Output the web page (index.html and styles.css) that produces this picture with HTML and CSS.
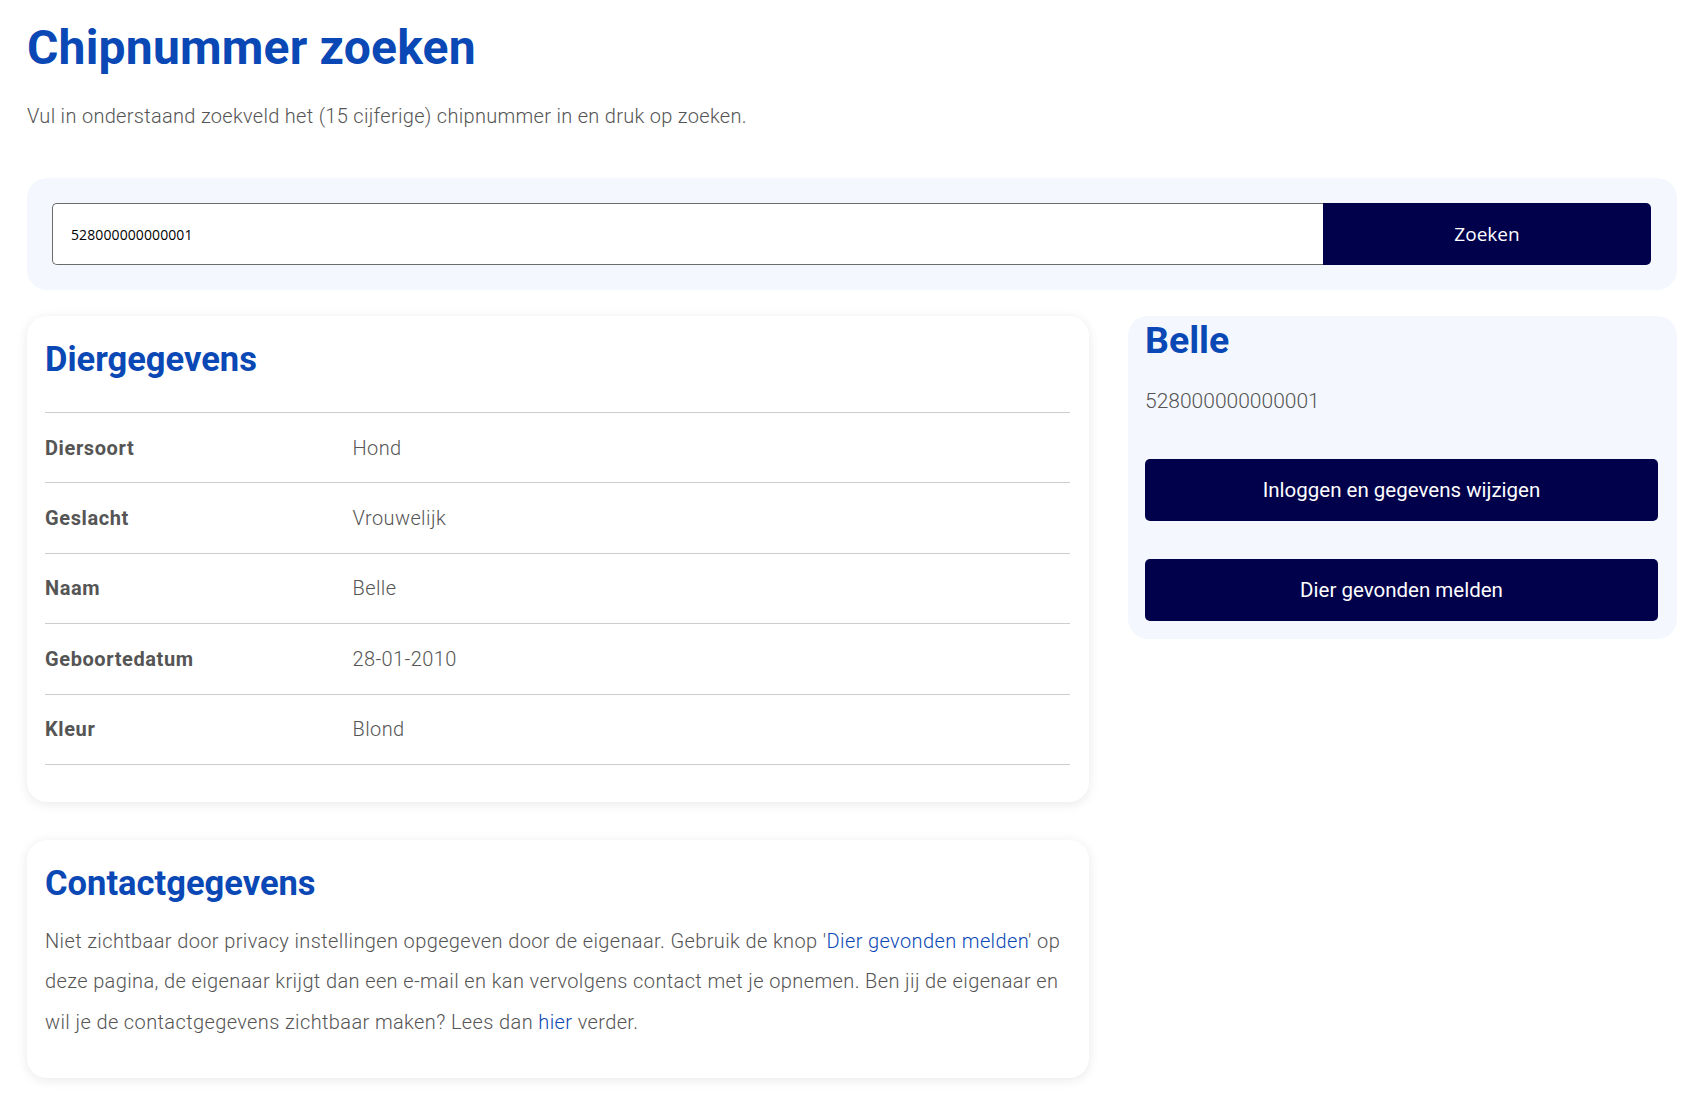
FILE: index.html
```html
<!DOCTYPE html>
<html lang="nl">
<head>
    <meta charset="UTF-8">
    <meta name="viewport" content="width=device-width, initial-scale=1.0">
    <title>Chipnummer zoeken</title>
    <link rel="stylesheet" href="styles.css">
</head>
<body>
    <div class="page">
        <h1 class="page-title">Chipnummer zoeken</h1>
        <p class="intro">Vul in onderstaand zoekveld het (15 cijferige) chipnummer in en druk op zoeken.</p>

        <form class="search-panel" onsubmit="return false;">
            <input class="search-input" type="text" value="528000000000001">
            <button class="search-button" type="submit">Zoeken</button>
        </form>

        <div class="result">
            <div class="main-col">
                <div class="card">
                    <h2 class="card-title">Diergegevens</h2>
                    <table class="details">
                        <tr><th>Diersoort</th><td>Hond</td></tr>
                        <tr><th>Geslacht</th><td>Vrouwelijk</td></tr>
                        <tr><th>Naam</th><td>Belle</td></tr>
                        <tr><th>Geboortedatum</th><td>28-01-2010</td></tr>
                        <tr><th>Kleur</th><td>Blond</td></tr>
                    </table>
                </div>

                <div class="card contact">
                    <h2 class="card-title">Contactgegevens</h2>
                    <p>Niet zichtbaar door privacy instellingen opgegeven door de eigenaar. Gebruik de knop '<a href="#">Dier gevonden melden</a>' op deze pagina, de eigenaar krijgt dan een e-mail en kan vervolgens contact met je opnemen. Ben jij de eigenaar en wil je de contactgegevens zichtbaar maken? Lees dan <a href="#">hier</a> verder.</p>
                </div>
            </div>

            <div class="side-card">
                <h2 class="side-title">Belle</h2>
                <p class="chip">528000000000001</p>
                <a class="action" href="#">Inloggen en gegevens wijzigen</a>
                <a class="action" href="#">Dier gevonden melden</a>
            </div>
        </div>
    </div>
</body>
</html>
```

FILE: styles.css
```css
body {
    margin: 0;
    font-family: Roboto, "Liberation Sans", sans-serif;
    color: #5a5a5a;
    background-color: #fff;
}
.page {
    padding: 0 22px 40px 27px;
}
.page-title {
    margin: 0;
    padding-top: 20px;
    font-size: 48px;
    line-height: 56px;
    font-weight: 700;
    color: #0a48b5;
    letter-spacing: 0.2px;
}
.intro {
    margin: 28px 0 0;
    font-size: 20px;
    line-height: 24px;
    font-weight: 300;
    letter-spacing: 0.3px;
    color: #555;
}
.search-panel {
    display: flex;
    margin-top: 50px;
    padding: 25px 26px 25px 25px;
    background-color: #f4f8fe;
    border-radius: 20px;
}
.search-input {
    flex: 1;
    height: 62px;
    box-sizing: border-box;
    padding: 0 18px;
    border: 1px solid #6b6b6b;
    border-right: none;
    border-radius: 5px 0 0 5px;
    font-family: "Open Sans", sans-serif;
    font-size: 14px;
    letter-spacing: 0.1px;
    color: #000;
    outline: none;
}
.search-button {
    width: 328px;
    height: 62px;
    border: none;
    border-radius: 0 5px 5px 0;
    background-color: #00004b;
    color: #fff;
    font-family: "Open Sans", sans-serif;
    font-size: 19px;
    cursor: pointer;
}
.result {
    display: grid;
    grid-template-columns: minmax(0, 1062fr) minmax(0, 549fr);
    gap: 39px;
    margin-top: 26px;
    align-items: start;
}
.main-col {
    display: flex;
    flex-direction: column;
    gap: 38px;
}
.card {
    background-color: #fff;
    border-radius: 20px;
    box-shadow: 0 2px 12px rgba(0, 0, 0, 0.09);
    padding: 23px 19px 37px 18px;
}
.card-title {
    margin: 0;
    font-size: 34.5px;
    line-height: 40px;
    font-weight: 700;
    color: #0a48b5;
}
.details {
    width: 100%;
    margin-top: 33px;
    border-collapse: collapse;
    font-size: 20px;
}
.details tr {
    border-top: 1px solid #cdcdcd;
    border-bottom: 1px solid #cdcdcd;
}
.details th,
.details td {
    height: 69.4px;
    padding: 0;
    text-align: left;
    vertical-align: middle;
}
.details th {
    width: 30%;
    font-weight: 700;
    letter-spacing: 0.6px;
    color: #555;
}
.details td {
    font-weight: 300;
    letter-spacing: 0.4px;
    color: #555;
}
.contact {
    padding-bottom: 36px;
}
.contact p {
    margin: 18px 0 0;
    font-size: 20px;
    line-height: 40.5px;
    font-weight: 300;
    letter-spacing: 0.38px;
    color: #555;
}
.contact a {
    color: #0a48b5;
    text-decoration: none;
}
.side-card {
    background-color: #f4f8fe;
    border-radius: 20px;
    padding: 2px 19px 18px 17px;
}
.side-title {
    margin: 0;
    font-size: 37.5px;
    line-height: 44px;
    font-weight: 700;
    color: #0a48b5;
}
.chip {
    margin: 27px 0 0;
    font-size: 21px;
    line-height: 24px;
    font-weight: 300;
    color: #555;
}
.action {
    display: flex;
    align-items: center;
    justify-content: center;
    height: 62px;
    margin-top: 38px;
    border-radius: 5px;
    background-color: #00004b;
    color: #fff;
    font-size: 20.5px;
    text-decoration: none;
}
.chip + .action {
    margin-top: 46px;
}
```
